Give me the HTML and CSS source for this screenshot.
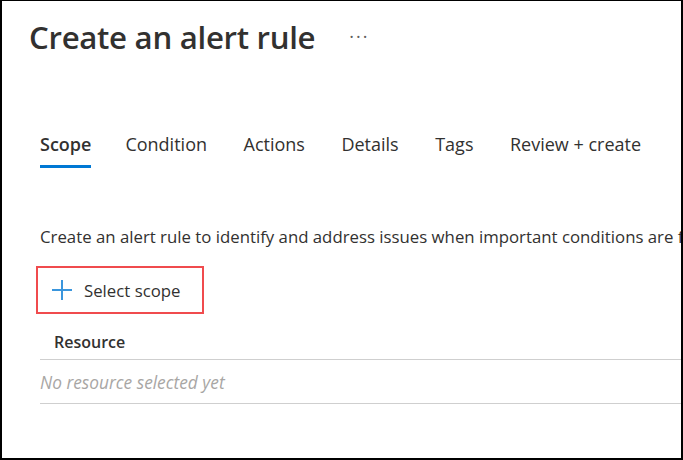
FILE: index.html
```html
<!DOCTYPE html>
<html>
<head>
<meta charset="utf-8">
<link rel="stylesheet" href="styles.css">
</head>
<body>
<div class="frame">
  <header class="header">
    <h1 class="title">Create an alert rule</h1>
    <span class="more">···</span>
  </header>
  <nav class="tabs">
    <span class="tab active">Scope</span>
    <span class="tab">Condition</span>
    <span class="tab">Actions</span>
    <span class="tab">Details</span>
    <span class="tab">Tags</span>
    <span class="tab">Review + create</span>
  </nav>
  <p class="desc">Create an alert rule to identify and address issues when important conditions are found in your monitoring data.</p>
  <div class="scope-row">
    <button class="select-scope">
      <svg class="plus" width="20" height="20" viewBox="0 0 20 20"><path d="M10 0v20M0 10h20" stroke="#3a96dd" stroke-width="2" fill="none"/></svg>
      <span>Select scope</span>
    </button>
  </div>
  <div class="table">
    <div class="th">Resource</div>
    <div class="empty">No resource selected yet</div>
  </div>
</div>
</body>
</html>
```
FILE: styles.css
```css
html, body { margin: 0; padding: 0; }
body { font-family: "Open Sans", "Noto Sans", sans-serif; color: #323130; background: #fff; }
.frame {
  width: 683px; height: 460px; box-sizing: border-box;
  border-style: solid; border-color: #000; border-width: 1px 2px 2px 2px;
  overflow: hidden; padding-left: 38px;
}
.header { display: flex; align-items: center; margin-left: -11px; height: 71px; }
.title { font-size: 31.2px; font-weight: 600; margin: 0; letter-spacing: -0.3px; color: #323130; }
.more { margin-left: 34px; font-size: 18px; color: #605e5c; letter-spacing: 2px; margin-top: -2px; }
.tabs { display: flex; gap: 36.5px; margin-top: 60px; font-size: 18px; }
.tab { padding-bottom: 9px; border-bottom: 3px solid transparent; white-space: nowrap; }
.tab.active { font-weight: 600; border-bottom-color: #0078d4; margin-right: -2.5px; }
.desc { margin: 57px 0 0 0; font-size: 16.8px; white-space: nowrap; }
.scope-row { margin-top: 18px; margin-left: -4px; }
.select-scope {
  display: flex; align-items: center; gap: 12px;
  border: 2px solid #f04b4e; background: #fff; padding: 0 22px 0 14px; height: 48px;
  font-family: inherit; font-size: 16.8px; color: #323130;
}
.table { margin-top: 12px; margin-right: -2px; }
.th { font-weight: 600; font-size: 16px; padding: 5px 14px 6px; border-bottom: 1px solid #cfcfcf; }
.empty { font-style: italic; color: #a8a6a4; font-size: 17.3px; padding: 11px 0 9px; border-bottom: 1px solid #cfcfcf; }
```
